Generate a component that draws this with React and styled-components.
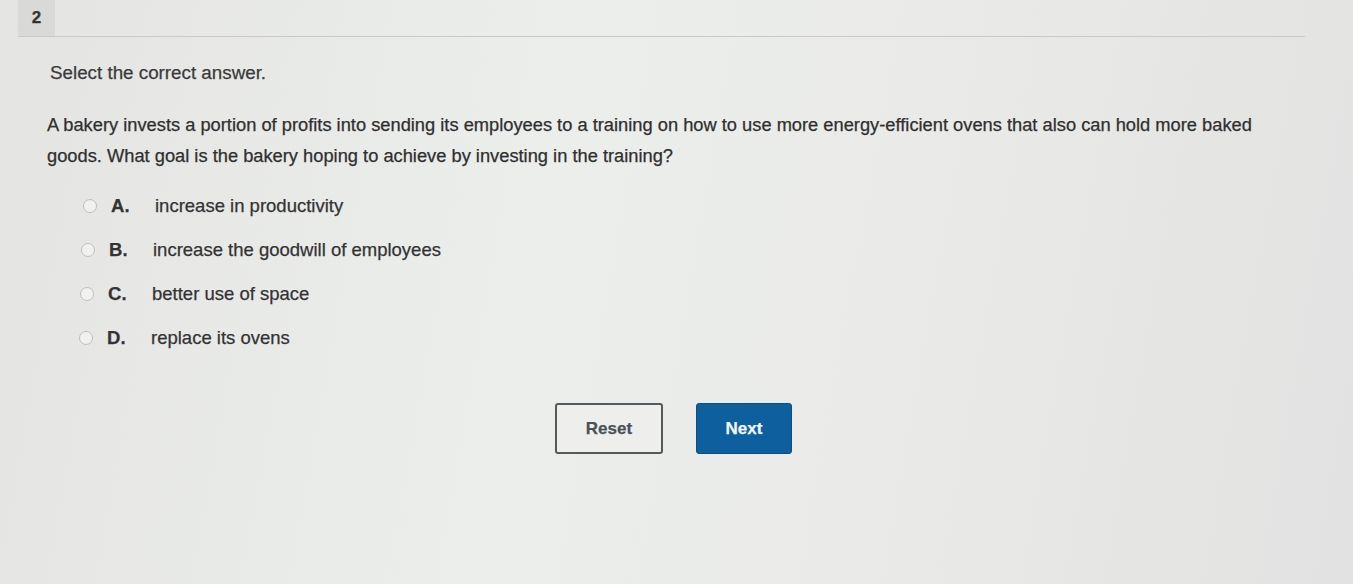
import React, { useState } from 'react'
import styled, { createGlobalStyle } from 'styled-components'

const GlobalStyle = createGlobalStyle`
  html, body {
    margin: 0;
    padding: 0;
    background: #e7e8e6;
  }
  body {
    font-family: "Liberation Sans", Arial, sans-serif;
    color: #343434;
    -webkit-text-stroke: 0.25px currentColor;
  }
`

const Page = styled.div`
  width: 1353px;
  height: 584px;
  overflow: hidden;
  background: linear-gradient(100deg, #e4e5e3 0%, #eceeec 40%, #e9eae7 70%, #e1e2e1 100%);
`

const Header = styled.div`
  display: flex;
  margin: 0 48px 0 18px;
  height: 36px;
  border-bottom: 1px solid #c9cac8;
`

const NumberBadge = styled.div`
  width: 37px;
  height: 36px;
  display: flex;
  align-items: center;
  justify-content: center;
  background: #d9dad8;
  font-weight: bold;
  font-size: 17px;
  color: #333;
`

const Body = styled.div`
  padding: 25px 0 0 47px;
`

const Instruction = styled.p`
  margin: 0 0 0 3px;
  font-size: 18.8px;
  line-height: 22px;
  color: #3a3a3a;
`

const Question = styled.p`
  margin: 25px 0 0;
  width: 1222px;
  font-size: 18.3px;
  line-height: 31px;
  color: #2f2f2f;
`

const Options = styled.div`
  display: flex;
  flex-direction: column;
  gap: 22px;
  margin-top: 24px;
  padding-left: ${(p) => p.$indent}px;
`

const Option = styled.label`
  display: flex;
  align-items: center;
  height: 22px;
  font-size: 18.5px;
  color: #333;
  cursor: pointer;
  margin-left: ${(p) => p.$shift}px;
`

const Radio = styled.span`
  width: 12px;
  height: 12px;
  border-radius: 50%;
  border: 1px solid #bfc0be;
  background: ${(p) => (p.$checked ? '#0d5c99' : '#f1f2f0')};
  margin-right: 14px;
  -webkit-text-stroke: 0;
`

const Letter = styled.span`
  font-weight: bold;
  width: 44px;
`

const Actions = styled.div`
  display: flex;
  gap: 33px;
  margin: 54px 0 0 508px;
`

const Button = styled.button`
  height: 51px;
  border-radius: 3px;
  font-family: "Liberation Sans", Arial, sans-serif;
  font-size: 17px;
  font-weight: bold;
  cursor: pointer;
`

const ResetButton = styled(Button)`
  width: 108px;
  background: #eeefed;
  color: #4a5258;
  border: 2px solid #555a5c;
`

const NextButton = styled(Button)`
  width: 96px;
  background: #0e5f9d;
  color: #f4f6f8;
  border: 1px solid #0b4f84;
`

const choices = [
  { key: 'A', text: 'increase in productivity', shift: 3 },
  { key: 'B', text: 'increase the goodwill of employees', shift: 1 },
  { key: 'C', text: 'better use of space', shift: 0 },
  { key: 'D', text: 'replace its ovens', shift: -1 },
]

const App = () => {
  const [selected, setSelected] = useState(null)

  return (
    <Page>
      <GlobalStyle />
      <Header>
        <NumberBadge>2</NumberBadge>
      </Header>
      <Body>
        <Instruction>Select the correct answer.</Instruction>
        <Question>
          A bakery invests a portion of profits into sending its employees to a training on how to use more
          energy-efficient ovens that also can hold more baked goods. What goal is the bakery hoping to achieve by
          investing in the training?
        </Question>
        <Options $indent={33}>
          {choices.map((c) => (
            <Option key={c.key} $shift={c.shift} onClick={() => setSelected(c.key)}>
              <Radio $checked={selected === c.key} />
              <Letter>{c.key}.</Letter>
              {c.text}
            </Option>
          ))}
        </Options>
        <Actions>
          <ResetButton onClick={() => setSelected(null)}>Reset</ResetButton>
          <NextButton>Next</NextButton>
        </Actions>
      </Body>
    </Page>
  )
}

export default App
